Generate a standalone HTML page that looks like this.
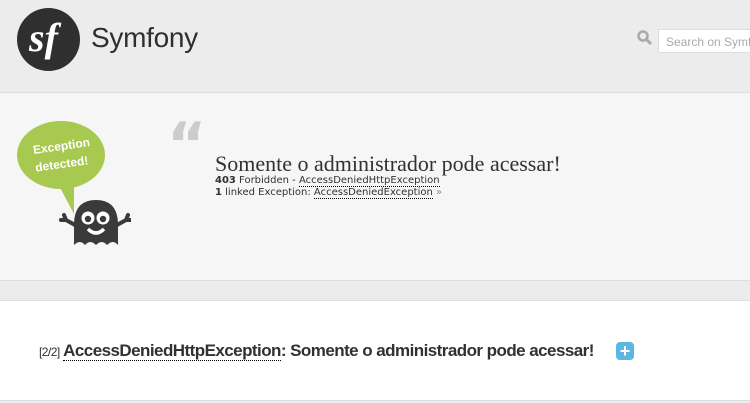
<!DOCTYPE html>
<html><head><style>
body{margin:0;width:750px;height:403px;overflow:hidden;background:#ececec;font-family:"Liberation Sans",sans-serif;position:relative}
.a{position:absolute}
a{color:#313131;text-decoration:none;border-bottom:1px dotted #000}
</style></head><body>
<div class="a" style="left:17px;top:8px;width:63px;height:63px;border-radius:50%;background:#2f2f2f"></div>
<div class="a" style="left:29px;top:13px;font-family:'Liberation Serif',serif;font-style:italic;font-weight:bold;font-size:40px;color:#fff;line-height:50px">sf</div>
<div class="a" style="left:91px;top:22px;font-size:28px;color:#2f2f2f;letter-spacing:-0.3px">Symfony</div>
<svg class="a" style="left:637px;top:30px" width="16" height="16"><circle cx="6" cy="6" r="4.5" fill="none" stroke="#aaa" stroke-width="2.5"/><path d="M9 9l5 5" stroke="#aaa" stroke-width="3"/></svg>
<div class="a" style="left:658px;top:29px;width:100px;height:24px;background:#fff;border:1px solid #ddd;box-sizing:border-box;font-size:12px;color:#aaa;padding:5px 7px;white-space:nowrap">Search on Symfony</div>
<div class="a" style="left:0;top:92px;width:750px;height:187px;background:#f6f6f6;border-top:1px solid #ddd;border-bottom:1px solid #ddd"></div>
<svg class="a" style="left:16px;top:120px" width="115" height="130">
<ellipse cx="45" cy="35" rx="44" ry="34" fill="#a8c94f"/>
<path d="M40 60 L58 94 L58 60 Z" fill="#a8c94f"/>
<text x="46" y="30" fill="#fff" font-size="12" font-weight="bold" text-anchor="middle" transform="rotate(-8 46 30)" font-family="Liberation Sans">Exception</text>
<text x="46" y="48" fill="#fff" font-size="12" font-weight="bold" text-anchor="middle" transform="rotate(-8 46 46)" font-family="Liberation Sans">detected!</text>
<path d="M58 125 V105 Q58 80 80 80 Q102 80 102 105 V125 Q97 119 91 125 Q86 119 80 125 Q74 119 69 125 Q64 119 58 125Z" fill="#3a3a3a"/>
<circle cx="72" cy="98" r="6.5" fill="#fff"/><circle cx="87" cy="98" r="6.5" fill="#fff"/>
<circle cx="72" cy="99" r="3.2" fill="#3a3a3a"/><circle cx="87" cy="99" r="3.2" fill="#3a3a3a"/>
<path d="M72 109 Q80 117 88 109" stroke="#fff" stroke-width="3.5" fill="none"/>
<path d="M59 105 L50 100 M50 100 l-2 -5 M50 100 l-5 0 M101 105 L110 100 M110 100 l2 -5 M110 100 l5 0" stroke="#3a3a3a" stroke-width="4" stroke-linecap="round"/>
</svg>
<div class="a" style="left:167px;top:115px;font-family:'DejaVu Sans',sans-serif;font-size:60px;font-weight:bold;color:#ccc;line-height:60px">“</div>
<div class="a" style="left:215px;top:151px;font-family:'Liberation Serif',serif;font-size:22px;color:#313131;white-space:nowrap">Somente o administrador pode acessar!</div>
<div class="a" style="left:215px;top:175px;font-family:'DejaVu Sans',sans-serif;font-size:10px;color:#313131;line-height:12px;white-space:nowrap"><b>403</b> Forbidden - <a>AccessDeniedHttpException</a><br><b>1</b> linked Exception: <a>AccessDeniedException</a> <span style="color:#888">»</span></div>
<div class="a" style="left:0;top:300px;width:750px;height:99px;background:#fff;border-top:1px solid #ddd;border-bottom:1px solid #ddd"></div>
<div class="a" style="left:39px;top:341px;font-size:17px;font-weight:bold;color:#313131;white-space:nowrap;letter-spacing:-0.55px"><span style="font-size:12px;font-weight:normal">[2/2]</span> <a>AccessDeniedHttpException</a>: Somente o administrador pode acessar!</div>
<div class="a" style="left:616px;top:342px;width:18px;height:18px;border-radius:4px;background:#5eb5e0;color:#fff;font-weight:bold;font-size:18px;line-height:18px;text-align:center">+</div>
</body></html>
